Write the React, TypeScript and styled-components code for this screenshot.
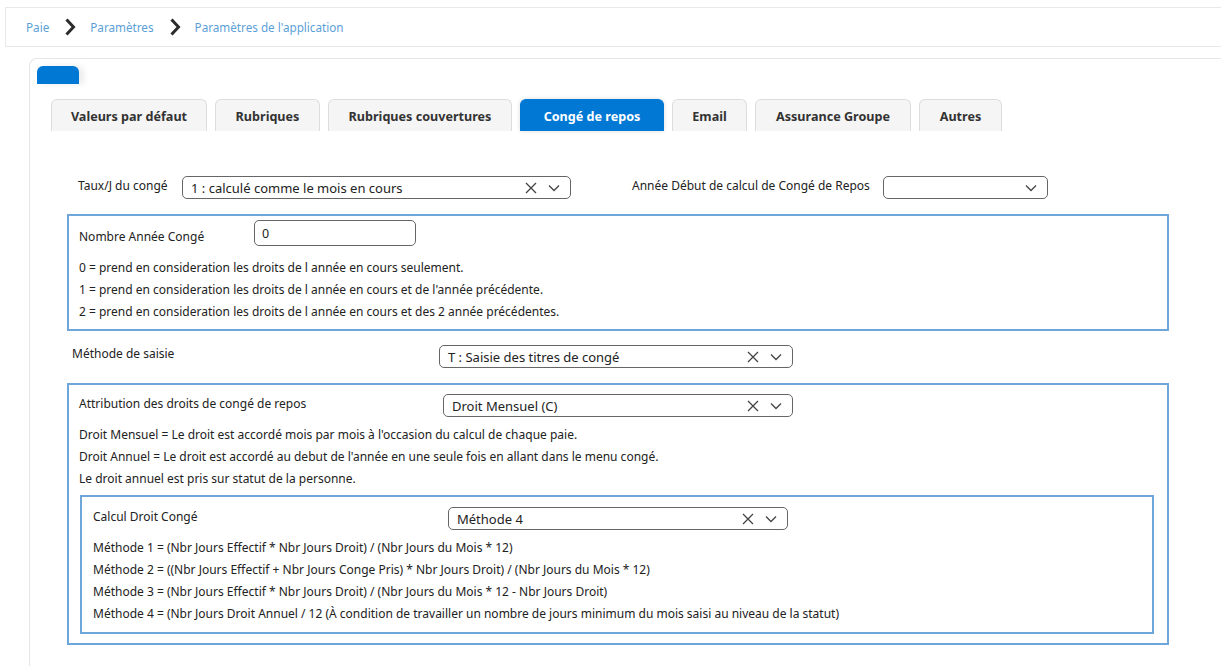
import React from "react";
import styled, { createGlobalStyle } from "styled-components";

const GlobalStyle = createGlobalStyle`
  body {
    margin: 0;
    background: #ffffff;
    font-family: "Noto Sans", "Open Sans", Arial, sans-serif;
    color: #222;
  }
`;

const tabs = [
    { label: "Valeurs par défaut", width: 156 },
    { label: "Rubriques", width: 105 },
    { label: "Rubriques couvertures", width: 184 },
    { label: "Congé de repos", width: 144, active: true },
    { label: "Email", width: 75 },
    { label: "Assurance Groupe", width: 156 },
    { label: "Autres", width: 83 },
];

const Chevron = () => (
    <svg width="12" height="18" viewBox="0 0 12 18">
        <path d="M2.5 1.5 L9.5 9 L2.5 16.5" fill="none" stroke="#2b2b2b" strokeWidth="3" />
    </svg>
);

const ClearIcon = () => (
    <svg width="12" height="12" viewBox="0 0 12 12">
        <path d="M1 1 L11 11 M11 1 L1 11" stroke="#444" strokeWidth="1.3" fill="none" />
    </svg>
);

const CaretIcon = () => (
    <svg width="12" height="8" viewBox="0 0 12 8">
        <path d="M1 1.5 L6 6.5 L11 1.5" stroke="#444" strokeWidth="1.3" fill="none" />
    </svg>
);

interface SelectProps {
    value?: string;
    width: number;
    clearable?: boolean;
}

const Select = ({ value, width, clearable = true }: SelectProps) => (
    <SelectBox $width={width}>
        <SelectValue>{value}</SelectValue>
        <SelectIcons>
            {clearable && <ClearIcon />}
            <CaretIcon />
        </SelectIcons>
    </SelectBox>
);

const App = () => {
    return (
        <>
            <GlobalStyle />
            <Page>
                <Breadcrumb>
                    <Crumb>Paie</Crumb>
                    <Chevron />
                    <Crumb>Paramètres</Crumb>
                    <Chevron />
                    <Crumb>Paramètres de l'application</Crumb>
                </Breadcrumb>

                <Card>
                    <MiniTab />
                    <TabRow>
                        {tabs.map(tab => (
                            <Tab key={tab.label} $width={tab.width} $active={tab.active}>
                                {tab.label}
                            </Tab>
                        ))}
                    </TabRow>

                    <Form>
                        <TopRow>
                            <Label $width={104}>Taux/J du congé</Label>
                            <Select value="1 : calculé comme le mois en cours" width={389} />
                            <Label $width={251} style={{ marginLeft: 61 }}>
                                Année Début de calcul de Congé de Repos
                            </Label>
                            <Select width={165} clearable={false} />
                        </TopRow>

                        <Group $pad="2px 10px 6px">
                            <FieldRow>
                                <Label $width={175} $offset={4}>Nombre Année Congé</Label>
                                <TextInput defaultValue="0" />
                            </FieldRow>
                            <Notes $top={11}>
                                <Note>0 = prend en consideration les droits de l année en cours seulement.</Note>
                                <Note>1 = prend en consideration les droits de l année en cours et de l'année précédente.</Note>
                                <Note>2 = prend en consideration les droits de l année en cours et des 2 année précédentes.</Note>
                            </Notes>
                        </Group>

                        <MethodRow>
                            <Label $width={367} $offset={-3}>Méthode de saisie</Label>
                            <Select value="T : Saisie des titres de congé" width={354} />
                        </MethodRow>

                        <Group $pad="9px 13px 9px 10px">
                            <FieldRow>
                                <Label $width={364}>Attribution des droits de congé de repos</Label>
                                <Select value="Droit Mensuel (C)" width={350} />
                            </FieldRow>
                            <Notes $top={7}>
                                <Note>Droit Mensuel = Le droit est accordé mois par mois à l'occasion du calcul de chaque paie.</Note>
                                <Note>Droit Annuel = Le droit est accordé au debut de l'année en une seule fois en allant dans le menu congé.</Note>
                                <Note>Le droit annuel est pris sur statut de la personne.</Note>
                            </Notes>

                            <InnerGroup $pad="10px 11px 7px">
                                <FieldRow>
                                    <Label $width={355}>Calcul Droit Congé</Label>
                                    <Select value="Méthode 4" width={340} />
                                </FieldRow>
                                <Notes $top={7}>
                                    <Note>Méthode 1 = (Nbr Jours Effectif * Nbr Jours Droit) / (Nbr Jours du Mois * 12)</Note>
                                    <Note>Méthode 2 = ((Nbr Jours Effectif + Nbr Jours Conge Pris) * Nbr Jours Droit) / (Nbr Jours du Mois * 12)</Note>
                                    <Note>Méthode 3 = (Nbr Jours Effectif * Nbr Jours Droit) / (Nbr Jours du Mois * 12 - Nbr Jours Droit)</Note>
                                    <Note>Méthode 4 = (Nbr Jours Droit Annuel / 12 (À condition de travailler un nombre de jours minimum du mois saisi au niveau de la statut)</Note>
                                </Notes>
                            </InnerGroup>
                        </Group>
                    </Form>
                </Card>
            </Page>
        </>
    );
};

const Page = styled.div`
  padding: 7px 0 0 5px;
  min-height: 666px;
  box-sizing: border-box;
  overflow: hidden;
`;

const Breadcrumb = styled.nav`
  height: 40px;
  box-sizing: border-box;
  display: flex;
  align-items: center;
  gap: 14px;
  padding-left: 20px;
  border: 1px solid #e8e8e8;
  border-right: none;
  background: #fff;
`;

const Crumb = styled.a`
  color: #5c9fd8;
  font-size: 11.7px;
  margin-right: 1px;
  cursor: pointer;
`;

const Card = styled.div`
  margin: 11px 0 0 24px;
  min-height: 620px;
  border: 1px solid #e6e6e6;
  border-right: none;
  border-bottom: none;
  border-radius: 8px 0 0 0;
  padding: 7px 0 0 7px;
  background: #fff;
`;

const MiniTab = styled.div`
  width: 42px;
  height: 18px;
  background: #0078d4;
  border-radius: 6px 6px 0 0;
  box-shadow: 5px 0 6px rgba(0, 0, 0, 0.08);
`;

const TabRow = styled.div`
  display: flex;
  gap: 8px;
  margin-top: 15px;
  padding-left: 14px;
`;

const Tab = styled.div<{ $width: number; $active?: boolean }>`
  width: ${p => p.$width}px;
  height: 32px;
  box-sizing: border-box;
  display: flex;
  align-items: center;
  justify-content: center;
  padding-top: 2px;
  border: 1px solid ${p => (p.$active ? "#0078d4" : "#dddddd")};
  border-bottom: none;
  border-radius: 6px 6px 0 0;
  background: ${p => (p.$active ? "#0078d4" : "#f5f5f5")};
  color: ${p => (p.$active ? "#ffffff" : "#333333")};
  box-shadow: ${p => (p.$active ? "0 0 4px rgba(0,0,0,0.15)" : "none")};
  font-size: 12.6px;
  font-weight: 700;
  cursor: pointer;
`;

const Form = styled.div`
  width: 1102px;
  margin: 45px 0 0 30px;
  padding-bottom: 20px;
`;

const TopRow = styled.div`
  display: flex;
  align-items: center;
  padding-left: 11px;
`;

const MethodRow = styled.div`
  display: flex;
  align-items: center;
  margin-top: 14px;
  padding-left: 5px;
`;

const FieldRow = styled.div`
  display: flex;
  align-items: center;
`;

const Label = styled.span<{ $width: number; $offset?: number }>`
  width: ${p => p.$width}px;
  flex-shrink: 0;
  font-size: 12px;
  color: #222;
  position: relative;
  top: ${p => p.$offset ?? -2}px;
`;

const SelectBox = styled.div<{ $width: number }>`
  width: ${p => p.$width}px;
  height: 23px;
  box-sizing: border-box;
  display: flex;
  align-items: center;
  justify-content: space-between;
  padding: 0 10px 0 8px;
  border: 1px solid #666;
  border-radius: 5px;
  background: #fff;
`;

const SelectValue = styled.span`
  font-size: 13px;
  color: #222;
  white-space: nowrap;
`;

const SelectIcons = styled.span`
  display: flex;
  align-items: center;
  gap: 11px;
`;

const TextInput = styled.input`
  width: 162px;
  height: 26px;
  box-sizing: border-box;
  border: 1px solid #666;
  border-radius: 5px;
  padding: 0 7px;
  font-family: inherit;
  font-size: 12.5px;
  color: #222;
  margin-top: 2px;
`;

const Group = styled.div<{ $pad: string }>`
  margin-top: 15px;
  border: 2px solid #6ea6d9;
  padding: ${p => p.$pad};
`;

const InnerGroup = styled(Group)`
  margin: 5px 0 0 1px;
`;

const Notes = styled.div<{ $top: number }>`
  margin-top: ${p => p.$top}px;
`;

const Note = styled.div`
  height: 22px;
  line-height: 22px;
  font-size: 12px;
  color: #222;
  white-space: nowrap;
`;

export default App;
